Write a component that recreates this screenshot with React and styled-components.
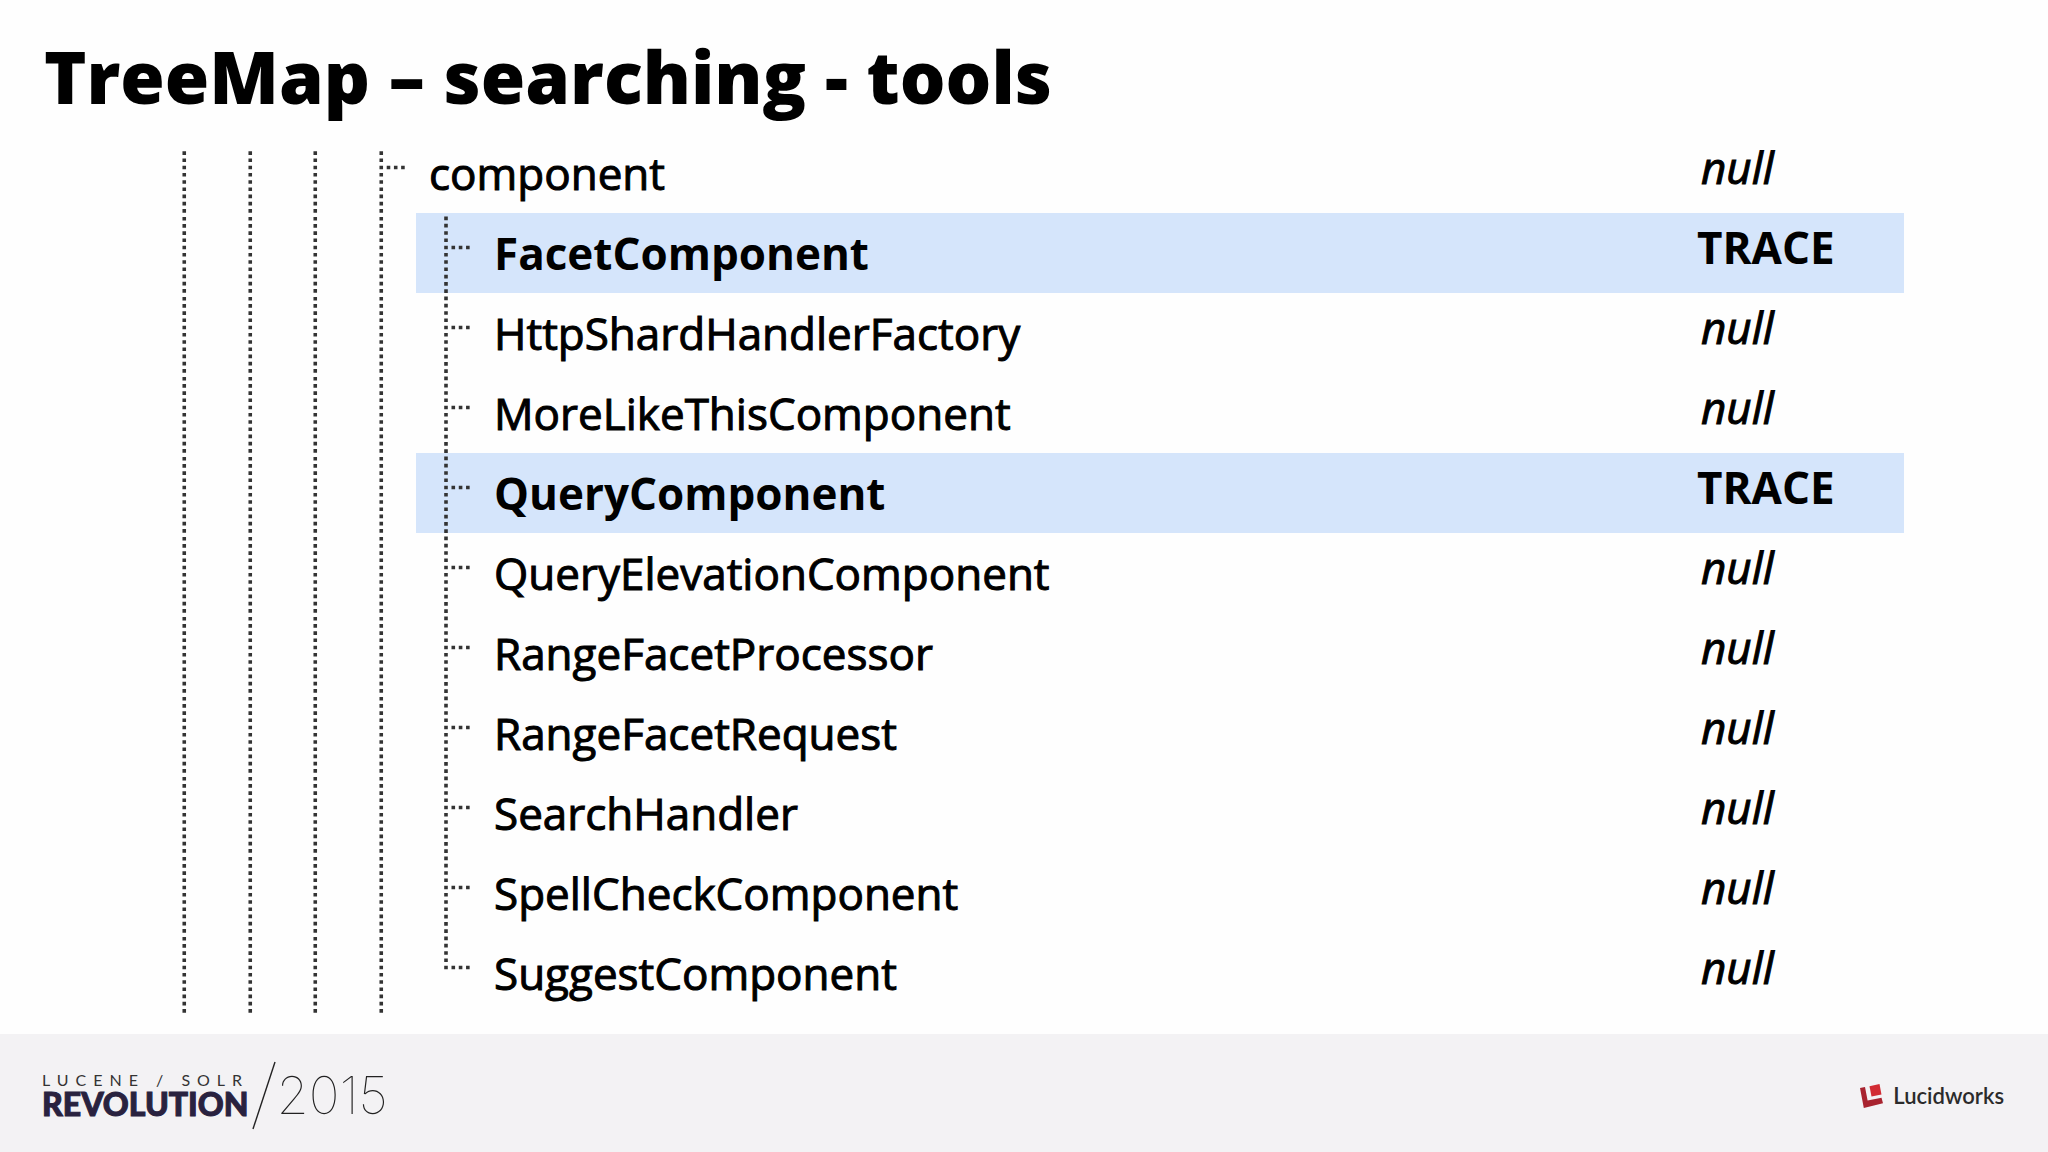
import React from "react";
import styled, { createGlobalStyle } from "styled-components";

const GlobalStyle = createGlobalStyle`
  * { box-sizing: border-box; }
  body { margin: 0; background: #fefefe; }
`;

const Slide = styled.main`
  min-height: 100vh;
  display: flex;
  flex-direction: column;
  background: #fefefe;
  color: #000;
  font-family: "Open Sans", "Noto Sans", sans-serif;
`;

const Title = styled.h1`
  margin: 0;
  padding: 26px 44px 7px;
  font-size: 72px;
  line-height: 100px;
  font-weight: 800;
`;

const TreeArea = styled.section`
  flex: 1;
  padding: 0 144px 20px 152px;
`;

const Tree = styled.table`
  width: 100%;
  table-layout: fixed;
  border-collapse: collapse;
  font-size: 44px;
  line-height: 60px;
`;

const RailCol = styled.col`
  width: 264px;
`;

const LevelCol = styled.col`
  width: 208px;
`;

const Row = styled.tr`
  height: 80px;
  font-weight: ${(p) => (p.$active ? 700 : 400)};
  -webkit-text-stroke: ${(p) => (p.$active ? "0" : "1px #000")};
`;

const RailCell = styled.td`
  padding: 0 2px 0 0;
`;

const Rails = styled.div`
  display: grid;
  grid-template-columns: repeat(4, 1fr);
  height: 80px;
`;

const Cell = styled.td`
  height: 80px;
  padding: 0;
  background: ${(p) => (p.$active ? "#d5e5fb" : "transparent")};
`;

const Entry = styled.div`
  display: flex;
  height: 80px;
  padding-left: ${(p) => (p.$nested ? 0 : 13)}px;
`;

const Name = styled.span`
  padding-top: 10px;
`;

const Level = styled.div`
  height: 80px;
  padding-top: 4px;
  padding-left: ${(p) => (p.$active ? 1 : 5)}px;
  font-style: ${(p) => (p.$active ? "normal" : "italic")};
`;

const Dots = styled.svg`
  display: block;
  width: ${(p) => p.$width};
  height: 80px;
  overflow: hidden;
  stroke: #333;
  stroke-width: 3.6;
  stroke-dasharray: 3.6 3.673;
`;

function Rail({ first, branch }) {
  return (
    <Dots $width="100%" viewBox="0 0 66 80" aria-hidden="true">
      <line x1="32.5" x2="32.5" y1={first ? 18.145 : 3.6} y2="80" />
      {branch && <line x1="38" x2="57" y1="34.5" y2="34.5" />}
    </Dots>
  );
}

function Branch({ last }) {
  return (
    <Dots $width="78px" viewBox="0 0 78 80" aria-hidden="true">
      <line x1="30" x2="30" y1="3.6" y2={last ? 36.4 : 80} />
      <line x1="35.5" x2="56" y1="34.5" y2="34.5" />
    </Dots>
  );
}

const Footer = styled.footer`
  height: 118px;
  display: flex;
  align-items: center;
  justify-content: space-between;
  padding: 5px 44px 0 42px;
  background: #f3f2f4;
`;

const EventLogo = styled.div`
  display: flex;
  align-items: center;
  color: #29223f;
  font-family: Lato, sans-serif;
`;

const EventName = styled.div`
  display: flex;
  flex-direction: column;
  padding-bottom: 3px;
`;

const EventTop = styled.span`
  margin-right: -8px;
  font-size: 16px;
  line-height: 20px;
  letter-spacing: 7px;
  color: #333;
`;

const EventMain = styled.span`
  font-size: 32px;
  line-height: 28px;
  font-weight: 900;
  -webkit-text-stroke: 1px #29223f;
`;

const Slash = styled.svg`
  display: block;
  width: 24px;
  height: 70px;
  margin-left: 4px;
`;

const Year = styled.span`
  font-family: Inter, sans-serif;
  font-size: 52px;
  line-height: 68px;
  font-weight: 100;
  color: #222;
`;

const Brand = styled.div`
  display: flex;
  align-items: center;
  gap: 9px;
  color: #2b2b2b;
  font-family: Lato, sans-serif;
  font-size: 22px;
  line-height: 28px;
  font-weight: 600;
`;

const BrandMark = styled.svg`
  display: block;
  width: 26px;
  height: 26px;
`;

const loggers = [
  { name: "FacetComponent", level: "TRACE" },
  { name: "HttpShardHandlerFactory" },
  { name: "MoreLikeThisComponent" },
  { name: "QueryComponent", level: "TRACE" },
  { name: "QueryElevationComponent" },
  { name: "RangeFacetProcessor" },
  { name: "RangeFacetRequest" },
  { name: "SearchHandler" },
  { name: "SpellCheckComponent" },
  { name: "SuggestComponent" },
];

function LoggerRow({ name, level, root, last }) {
  const active = Boolean(level);
  return (
    <Row $active={active}>
      <RailCell>
        <Rails>
          {[0, 1, 2, 3].map((i) => (
            <Rail key={i} first={root} branch={root && i === 3} />
          ))}
        </Rails>
      </RailCell>
      <Cell $active={active}>
        <Entry $nested={!root}>
          {!root && <Branch last={last} />}
          <Name>{name}</Name>
        </Entry>
      </Cell>
      <Cell $active={active}>
        <Level $active={active}>{level || "null"}</Level>
      </Cell>
    </Row>
  );
}

export default function App() {
  return (
    <Slide>
      <GlobalStyle />
      <Title>TreeMap – searching - tools</Title>
      <TreeArea>
        <Tree>
          <colgroup>
            <RailCol />
            <col />
            <LevelCol />
          </colgroup>
          <tbody>
            <LoggerRow name="component" root />
            {loggers.map((l, i) => (
              <LoggerRow key={l.name} {...l} last={i === loggers.length - 1} />
            ))}
          </tbody>
        </Tree>
      </TreeArea>
      <Footer>
        <EventLogo>
          <EventName>
            <EventTop>LUCENE / SOLR</EventTop>
            <EventMain>REVOLUTION</EventMain>
          </EventName>
          <Slash viewBox="0 0 24 70" aria-hidden="true">
            <line x1="1" y1="68" x2="23" y2="1" stroke="#222" strokeWidth="1.4" />
          </Slash>
          <Year>2015</Year>
        </EventLogo>
        <Brand>
          <BrandMark viewBox="0 0 26 26" aria-hidden="true">
            <path d="M2 5 L7 4 L9.600 17.500 L23.500 14.800 L25 20.300 L5.800 25 Z" fill="#a8232f" />
            <path d="M11.500 3.300 L21.500 1 L23.500 11.600 L13.500 13.500 Z" fill="#d22b33" />
          </BrandMark>
          <span>Lucidworks</span>
        </Brand>
      </Footer>
    </Slide>
  );
}
